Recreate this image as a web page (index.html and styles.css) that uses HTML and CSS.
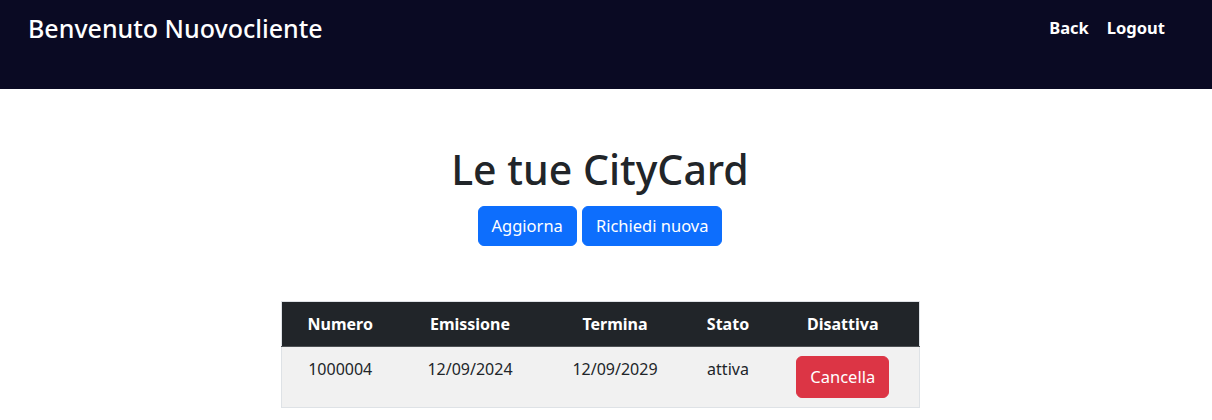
FILE: index.html
```html
<!DOCTYPE html>
<html lang="it">
<head>
<meta charset="utf-8">
<title>Le tue CityCard</title>
<link rel="stylesheet" href="styles.css">
</head>
<body>
<header class="topbar">
  <h3 class="brand">Benvenuto Nuovocliente</h3>
  <nav class="nav">
    <a class="nav-link" href="#">Back</a>
    <a class="nav-link" href="#">Logout</a>
  </nav>
</header>
<main class="main">
  <h1 class="title">Le tue CityCard</h1>
  <div class="actions">
    <button class="btn btn-primary">Aggiorna</button>
    <button class="btn btn-primary">Richiedi nuova</button>
  </div>
  <table class="cards">
    <colgroup>
      <col class="c1"><col class="c2"><col class="c3"><col class="c4"><col class="c5">
    </colgroup>
    <thead>
      <tr><th>Numero</th><th>Emissione</th><th>Termina</th><th>Stato</th><th>Disattiva</th></tr>
    </thead>
    <tbody>
      <tr><td>1000004</td><td>12/09/2024</td><td>12/09/2029</td><td>attiva</td><td><button class="btn btn-danger">Cancella</button></td></tr>
    </tbody>
  </table>
</main>
</body>
</html>
```
FILE: styles.css
```css
* { box-sizing: border-box; }
body {
  margin: 0;
  font-family: "Noto Sans", "Open Sans", sans-serif;
  font-size: 16px;
  line-height: 1.5;
  color: #212529;
  background: #fff;
}
.topbar {
  height: 89px;
  background: #0a0a23;
  display: flex;
  justify-content: space-between;
  align-items: flex-start;
  padding: 10px 47px 0 28px;
}
.brand {
  margin: 0;
  color: #fff;
  font-size: 25px;
  font-weight: 500;
  line-height: 1.5;
}
.nav {
  display: flex;
  gap: 18px;
  padding-top: 6px;
}
.nav-link {
  color: #fff;
  font-weight: 700;
  font-size: 16.5px;
  text-decoration: none;
}
.main {
  width: 1200px;
  display: flex;
  flex-direction: column;
  align-items: center;
  padding-top: 56px;
}
.title {
  margin: 0;
  font-size: 41px;
  font-weight: 500;
  line-height: 1.2;
}
.actions {
  display: flex;
  gap: 5px;
  margin-top: 12px;
}
.btn {
  font-family: inherit;
  font-size: 16.5px;
  line-height: 26px;
  padding: 6px 13px;
  border: 1px solid transparent;
  border-radius: 6px;
  color: #fff;
  cursor: pointer;
}
.btn-primary { background: #0d6efd; border-color: #0d6efd; }
.btn-danger { background: #dc3545; border-color: #dc3545; padding: 7px 13px; }
.cards {
  margin-top: 55px;
  width: 638px;
  border-collapse: collapse;
  table-layout: fixed;
  border: 1px solid #dee2e6;
}
.c1 { width: 118px; } .c2 { width: 142px; } .c3 { width: 148px; } .c4 { width: 78px; } .c5 { width: 152px; }
.cards th {
  background: #212529;
  color: #fff;
  font-weight: 700;
  padding: 10px 0;
  text-align: center;
  border-bottom: 1px solid #4d5154;
}
.cards td {
  background: #f1f1f1;
  padding: 9px 0 9px;
  text-align: center;
  vertical-align: top;
}
.cards td:not(:last-child) { padding-top: 10px; }
```
